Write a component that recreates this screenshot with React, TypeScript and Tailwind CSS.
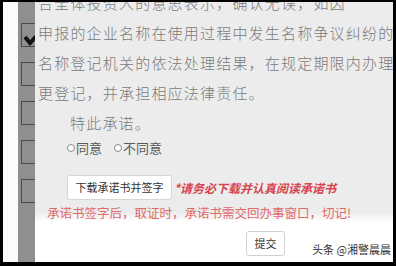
const lines = [
  '合全体投资人的意思表示，确认无误，如因',
  '申报的企业名称在使用过程中发生名称争议纠纷的',
  '名称登记机关的依法处理结果，在规定期限内办理',
  '更登记，并承担相应法律责任。',
]

const boxTops = [0, 1, 2, 3, 4]

function Radio({label}: {label: string}) {
  return (
    <span className="flex items-center">
      <span className="mr-[1px] inline-block h-[8px] w-[8px] rounded-full border border-[#8a8a8a] bg-white" />
      <span>{label}</span>
    </span>
  )
}

export default function App() {
  return (
    <div
      className="h-[266px] w-[396px] overflow-hidden bg-black pb-[4px] pl-[3px] pr-[3px] pt-[2px]"
      style={{fontFamily: '"Noto Sans CJK SC", "Noto Sans", sans-serif'}}
    >
      <div className="relative flex h-full overflow-hidden bg-white">
        <div className="w-[15px] shrink-0 bg-[#fbfbfb]" />
        <div className="w-[17px] shrink-0 overflow-hidden bg-[#8f8f8f] pl-[3px] pt-[21px]">
          <div className="flex w-[30px] flex-col gap-[15px]">
            {boxTops.map((i) => (
              <div key={i} className="relative h-[24px] w-[30px] border border-[#4a4a4a]">
                {i === 0 && (
                  <svg className="absolute left-[1px] top-[4px]" width="22" height="18" viewBox="0 0 22 18">
                    <path d="M2 9 L7 15 L20 1" fill="none" stroke="#111" strokeWidth="4" />
                  </svg>
                )}
              </div>
            ))}
          </div>
        </div>
        <div className="flex min-w-0 flex-1 flex-col bg-[linear-gradient(to_bottom,#ececec_0px,#ececec_210px,#ffffff_220px)]">
          <div
            className="-mt-[14px] overflow-hidden whitespace-nowrap pl-[3px] text-[15px] font-light leading-[30px] tracking-[1.2px] text-[#7a7a7a]"
            style={{fontFamily: '"Noto Sans CJK SC", serif'}}
          >
            {lines.map((l) => (
              <div key={l}>{l}</div>
            ))}
            <div className="pl-[32px]">特此承诺。</div>
          </div>
          <div className="ml-[32px] flex h-[20px] items-center gap-[12px] text-[13px] text-[#5a5a5a]">
            <Radio label="同意" />
            <Radio label="不同意" />
          </div>
          <div className="ml-[32px] mt-[17px] flex items-center">
            <div className="flex h-[25px] w-[105px] items-center justify-center rounded-[3px] border border-[#d6d6d6] bg-white text-[11px] text-[#333]">
              下载承诺书并签字
            </div>
            <span className="ml-[2px] text-[12px] font-bold italic text-[#d64550]">*请务必下载并认真阅读承诺书</span>
          </div>
          <div className="ml-[12px] mt-[5px] text-[12.5px] leading-[16px] text-[#e06a6a]">
            承诺书签字后，取证时，承诺书需交回办事窗口，切记!
          </div>
          <div className="ml-[211px] mt-[10px] flex h-[25px] w-[39px] items-center justify-center rounded-[3px] border border-[#d0d0d0] bg-white text-[11px] text-[#333]">
            提交
          </div>
        </div>
        <span className="absolute bottom-[5px] right-[2px] text-[11px] text-[#333]">头条 @湘警晨晨</span>
      </div>
    </div>
  )
}
